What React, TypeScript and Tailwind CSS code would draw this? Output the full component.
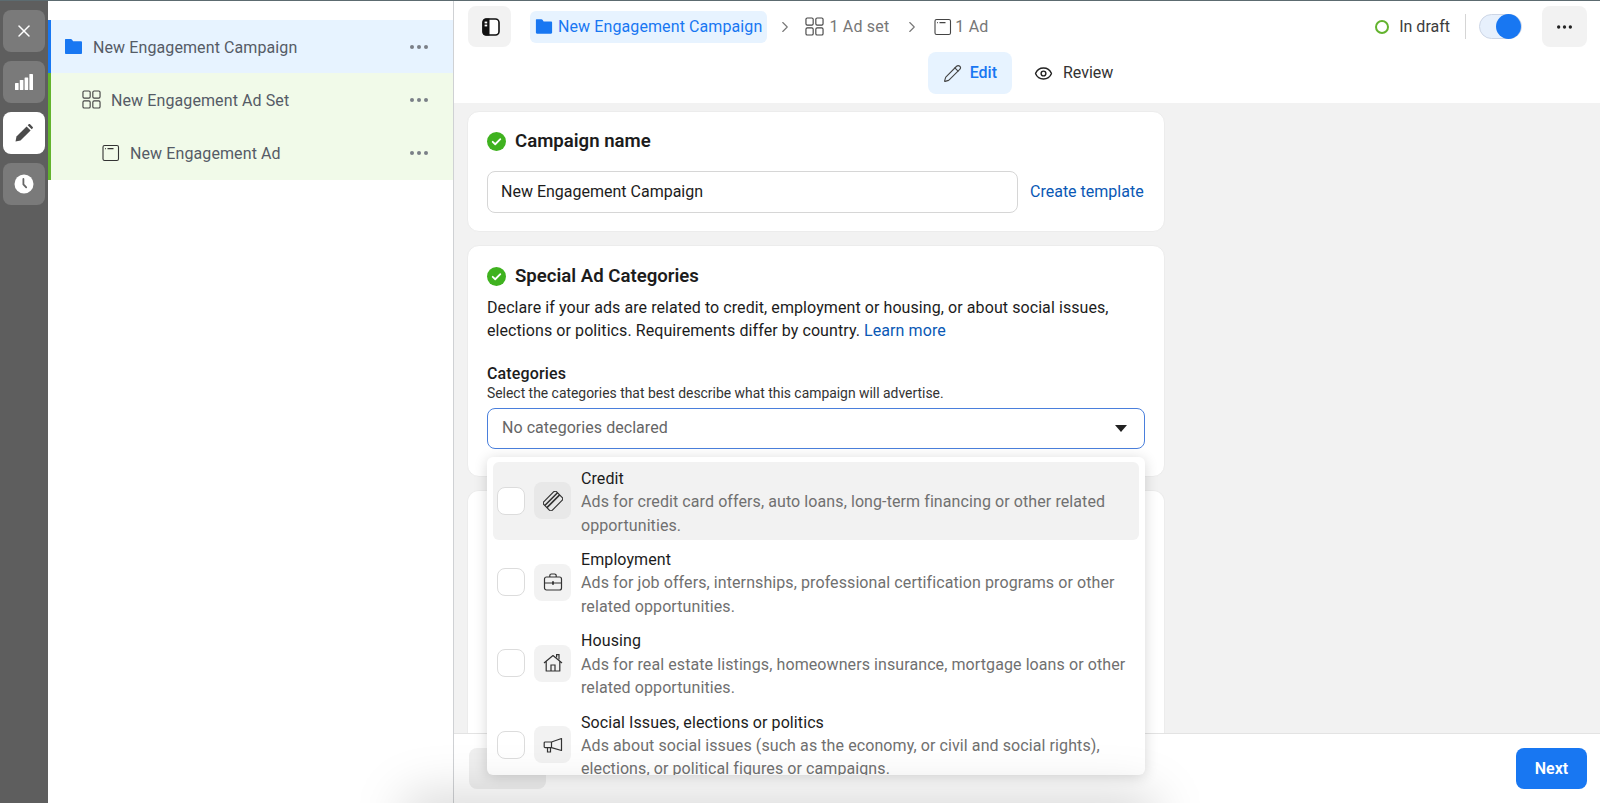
import React from 'react'
import { Pencil, X, Eye, ChevronRight } from 'lucide-react'

const GridIcon = ({ className = '' }: { className?: string }) => (
  <svg viewBox="0 0 20 20" fill="none" stroke="currentColor" strokeWidth="1.2" className={className}>
    <rect x="1" y="1" width="7.6" height="7.6" rx="1.4" />
    <rect x="11.4" y="1" width="7.6" height="7.6" rx="1.4" />
    <rect x="1" y="11.4" width="7.6" height="7.6" rx="1.4" />
    <rect x="11.4" y="11.4" width="7.6" height="7.6" rx="1.4" />
  </svg>
)

const AdIcon = ({ className = '' }: { className?: string }) => (
  <svg viewBox="0 0 18 18" fill="none" stroke="currentColor" strokeWidth="1.1" className={className}>
    <rect x="1" y="1.5" width="15.5" height="15" rx="1.6" />
    <path d="M3 4.6h.8M5.5 4.6h6" />
  </svg>
)

const FolderIcon = ({ className = '' }: { className?: string }) => (
  <svg viewBox="0 0 20 18" fill="#1877f2" className={className}>
    <path d="M1.5 1h5.6c.5 0 .9.2 1.2.6L9.6 3.4h8.2c.7 0 1.2.5 1.2 1.2v11.2c0 .7-.5 1.2-1.2 1.2H2.2c-.7 0-1.2-.5-1.2-1.2V1.5z" />
  </svg>
)

const CheckBadge = () => (
  <svg viewBox="0 0 18 18" className="h-[19px] w-[19px] shrink-0">
    <circle cx="9" cy="9" r="9" fill="#3fb21f" />
    <path d="M5.4 9.3l2.4 2.3 4.8-4.8" fill="none" stroke="#fff" strokeWidth="1.7" strokeLinecap="round" strokeLinejoin="round" />
  </svg>
)

const Dots = ({ className = '' }: { className?: string }) => (
  <svg viewBox="0 0 18 4" fill="currentColor" className={className}>
    <circle cx="2" cy="2" r="2" />
    <circle cx="9" cy="2" r="2" />
    <circle cx="16" cy="2" r="2" />
  </svg>
)

const BarsIcon = () => (
  <svg viewBox="0 0 18 16" fill="#fff" className="h-[16px] w-[18px]">
    <rect x="0" y="9" width="3.6" height="7" rx=".6" />
    <rect x="4.8" y="6" width="3.6" height="10" rx=".6" />
    <rect x="9.6" y="3.5" width="3.6" height="12.5" rx=".6" />
    <rect x="14.4" y="0" width="3.6" height="16" rx=".6" />
  </svg>
)

const SolidPencil = () => (
  <svg viewBox="0 0 18 18" fill="#4b4b4b" className="h-[18px] w-[18px]">
    <path d="M0.5 17.5l1-5L11.6 2.4l4 4L5.5 16.5l-5 1z" />
    <path d="M12.7 1.3l1-1c.4-.4 1-.4 1.4 0l2.6 2.6c.4.4.4 1 0 1.4l-1 1-4-4z" />
  </svg>
)

const ClockIcon = () => (
  <svg viewBox="0 0 20 20" className="h-[20px] w-[20px]">
    <circle cx="10" cy="10" r="9.5" fill="#fff" />
    <path d="M9.4 5v5.4l2.8 3" fill="none" stroke="#666" strokeWidth="1.8" strokeLinecap="round" strokeLinejoin="round" />
  </svg>
)

const PanelIcon = () => (
  <svg viewBox="0 0 18 18" className="h-[18px] w-[18px]">
    <rect x="1" y="1" width="16" height="16" rx="3.5" fill="#fff" stroke="#111" strokeWidth="1.6" />
    <path d="M4 .5h3.5v17H4A3.5 3.5 0 0 1 .5 14V4A3.5 3.5 0 0 1 4 .5z" fill="#111" />
    <rect x="2.6" y="3.6" width="2.6" height="1.8" fill="#fff" />
    <rect x="2.6" y="6.6" width="2.6" height="1.8" fill="#fff" />
  </svg>
)

const CardIcon = () => (
  <svg viewBox="0 0 20 20" fill="none" stroke="#333" strokeWidth="1.2" className="h-[20px] w-[20px]">
    <g transform="rotate(-45 10 10)">
      <rect x="1" y="4" width="18" height="12" rx="2.2" />
      <path d="M1 7.4h18M1 10.4h18" strokeWidth="1.6" />
    </g>
  </svg>
)

const CaseIcon = () => (
  <svg viewBox="0 0 20 20" fill="none" stroke="#333" strokeWidth="1.2" className="h-[20px] w-[20px]">
    <rect x="1.5" y="5" width="17" height="13" rx="2" />
    <path d="M6.8 5V3.6A1.6 1.6 0 0 1 8.4 2h3.2a1.6 1.6 0 0 1 1.6 1.6V5M1.5 11h17" />
    <path d="M10 9.2v3.6" strokeWidth="1.8" />
  </svg>
)

const HouseIcon = () => (
  <svg viewBox="0 0 20 20" fill="none" stroke="#333" strokeWidth="1.2" className="h-[20px] w-[20px]">
    <path d="M1 10l9-7.5L19 10M3.2 8.4V18h13.6V8.4" strokeLinejoin="round" />
    <path d="M8 18v-6h4v6M13.6 4.6V1.6h2.4v5" />
  </svg>
)

const MegaphoneIcon = () => (
  <svg viewBox="0 0 20 20" fill="none" stroke="#333" strokeWidth="1.2" className="h-[20px] w-[20px]">
    <path d="M18.5 3.5v12L8.5 12.6H2.2c-.6 0-1-.4-1-1V8c0-.6.4-1 1-1h6.3l10-3.5z" strokeLinejoin="round" />
    <path d="M8.5 7v5.6M4.5 12.6V17h3v-4.4" />
  </svg>
)

const categories = [
  {
    title: 'Credit',
    icon: <CardIcon />,
    desc: 'Ads for credit card offers, auto loans, long-term financing or other related opportunities.',
    active: true,
  },
  {
    title: 'Employment',
    icon: <CaseIcon />,
    desc: 'Ads for job offers, internships, professional certification programs or other related opportunities.',
  },
  {
    title: 'Housing',
    icon: <HouseIcon />,
    desc: 'Ads for real estate listings, homeowners insurance, mortgage loans or other related opportunities.',
  },
  {
    title: 'Social Issues, elections or politics',
    icon: <MegaphoneIcon />,
    desc: 'Ads about social issues (such as the economy, or civil and social rights), elections, or political figures or campaigns.',
  },
]

const TreeRow = ({ label, icon, className }: { label: string; icon: React.ReactNode; className: string }) => (
  <div className={`flex h-[53.3px] items-center pr-[25px] ${className}`}>
    <div className="flex flex-1 items-center gap-[10px]">
      {icon}
      <span className="pt-[2px] text-[16px] tracking-[0.1px] text-[#555b66]">{label}</span>
    </div>
    <Dots className="h-[4px] w-[18px] text-[#7a7f87]" />
  </div>
)

const App = () => {
  return (
    <div className="relative flex h-[803px] w-[1600px] overflow-hidden bg-white font-['Roboto',sans-serif] text-[#1c1e21]">
      <div className="absolute inset-x-0 top-0 z-30 h-px bg-[#5c6b70]" />

      {/* tool rail */}
      <div className="flex w-[48px] shrink-0 flex-col gap-[9px] bg-[#5e5e5e] pl-[3px] pr-[3px] pt-[10px]">
        <div className="flex h-[42px] items-center justify-center rounded-lg bg-[#7a7a7a]">
          <X className="h-[20px] w-[20px] text-white" strokeWidth={1.8} />
        </div>
        <div className="flex h-[42px] items-center justify-center rounded-lg bg-[#7a7a7a]">
          <BarsIcon />
        </div>
        <div className="flex h-[42px] items-center justify-center rounded-lg bg-white">
          <SolidPencil />
        </div>
        <div className="flex h-[42px] items-center justify-center rounded-lg bg-[#7a7a7a]">
          <ClockIcon />
        </div>
      </div>

      {/* campaign tree */}
      <div className="w-[406px] shrink-0 border-r border-[#cfd1d4] pt-[20px]">
        <TreeRow
          label="New Engagement Campaign"
          className="border-l-[3px] border-[#1877f2] bg-[#e7f3ff] pl-[13px]"
          icon={<FolderIcon className="h-[17px] w-[19px]" />}
        />
        <TreeRow
          label="New Engagement Ad Set"
          className="border-l-[3px] border-[#63b32e] bg-[#f1fae9] pl-[31px]"
          icon={<GridIcon className="h-[19px] w-[19px] text-[#444]" />}
        />
        <TreeRow
          label="New Engagement Ad"
          className="border-l-[3px] border-[#63b32e] bg-[#f1fae9] pl-[51px]"
          icon={<AdIcon className="h-[18px] w-[18px] text-[#333]" />}
        />
      </div>

      {/* main */}
      <div className="flex min-w-0 flex-1 flex-col">
        <div className="h-[103px] shrink-0 bg-white">
          <div className="flex items-center pl-[14px] pr-[13px] pt-[6px]">
            <div className="flex h-[41px] w-[43px] items-center justify-center rounded-lg bg-[#f2f2f2] pl-[2px]">
              <PanelIcon />
            </div>
            <div className="ml-[19px] flex h-[32px] items-center gap-[5px] rounded-md bg-[#e7f3ff] px-[5px]">
              <FolderIcon className="h-[17px] w-[18px]" />
              <span className="text-[16px] tracking-[0.1px] text-[#1877f2]">New Engagement Campaign</span>
            </div>
            <ChevronRight className="ml-[9px] h-[18px] w-[18px] text-[#777]" strokeWidth={1.5} />
            <GridIcon className="ml-[11px] h-[19px] w-[19px] text-[#444]" />
            <span className="ml-[5px] text-[16px] tracking-[0.2px] text-[#777]">1 Ad set</span>
            <ChevronRight className="ml-[14px] h-[18px] w-[18px] text-[#777]" strokeWidth={1.5} />
            <AdIcon className="ml-[13px] h-[18px] w-[18px] text-[#444]" />
            <span className="ml-[3px] text-[16px] tracking-[0.2px] text-[#777]">1 Ad</span>
            <div className="ml-auto flex items-center">
              <div className="h-[14px] w-[14px] rounded-full border-2 border-[#63b32e]" />
              <span className="ml-[10px] text-[16px] text-[#3c3c3c]">In draft</span>
              <div className="ml-[15px] h-[25px] w-px bg-[#d5d5d5]" />
              <div className="relative ml-[13px] h-[25px] w-[43px] rounded-full border border-[#cdd6e6] bg-[#e7f0fc]">
                <div className="absolute right-0 top-[-1px] h-[25px] w-[25px] rounded-full bg-[#1877f2]" />
              </div>
              <div className="ml-[20px] flex h-[41px] w-[45px] items-center justify-center rounded-lg bg-[#f2f2f2]">
                <Dots className="h-[4px] w-[15px] text-[#222]" />
              </div>
            </div>
          </div>
          <div className="ml-[1px] mt-[5px] flex justify-center gap-[8px]">
            <div className="flex h-[42px] items-center gap-[8px] rounded-lg bg-[#e7f3ff] px-[15px]">
              <Pencil className="h-[19px] w-[19px] text-[#444]" strokeWidth={1.4} />
              <span className="text-[16px] font-medium text-[#1877f2]">Edit</span>
            </div>
            <div className="flex h-[42px] items-center gap-[10px] px-[14px]">
              <Eye className="h-[19px] w-[19px] text-[#222]" strokeWidth={1.8} />
              <span className="text-[16px] text-[#333]">Review</span>
            </div>
          </div>
        </div>

        <div className="flex min-h-0 flex-1 flex-col gap-[13px] border-b border-[#e3e3e3] bg-[#f2f2f2] pt-[8px] pl-[13px]">
          <section className="h-[121px] w-[698px] shrink-0 rounded-xl border border-[#ececec] bg-white px-[19px] pt-[19px]">
            <div className="flex items-center gap-[9px]">
              <CheckBadge />
              <h2 className="text-[18.6px] font-semibold leading-[21px] text-[#1c1c1c]">Campaign name</h2>
            </div>
            <div className="mt-[19px] flex items-center gap-[12px]">
              <div className="flex h-[42px] w-[531px] items-center rounded-lg border border-[#d6d6d6] px-[13px] text-[16px] text-[#1c1c1c]">
                New Engagement Campaign
              </div>
              <a className="text-[16px] text-[#0a58b5]">Create template</a>
            </div>
          </section>

          <section className="relative z-10 h-[232px] w-[698px] shrink-0 rounded-xl border border-[#ececec] bg-white px-[19px] pt-[20px]">
            <div className="flex items-center gap-[9px]">
              <CheckBadge />
              <h2 className="text-[18.6px] font-semibold leading-[21px] text-[#1c1c1c]">Special Ad Categories</h2>
            </div>
            <p className="mt-[9px] text-[16px] leading-[23.4px] tracking-[0.08px] text-[#1c1c1c]">
              Declare if your ads are related to credit, employment or housing, or about social issues, elections or politics. Requirements differ by country.{' '}
              <a className="text-[#0a58b5]">Learn more</a>
            </p>
            <div className="mt-[21px] text-[16px] font-medium leading-[19px] tracking-[0.15px] text-[#1c1c1c]">Categories</div>
            <div className="mt-[2px] text-[13.9px] leading-[16px] text-[#333]">
              Select the categories that best describe what this campaign will advertise.
            </div>
            <div className="relative mt-[7px]">
              <div className="flex h-[41px] items-center justify-between rounded-lg border-[1.5px] border-[#4a7fdc] pl-[14px] pr-[17px] text-[16px] tracking-[0.05px] text-[#666]">
                No categories declared
                <span className="h-0 w-0 border-x-[6px] border-t-[7px] border-x-transparent border-t-[#222]" />
              </div>

              <div className="absolute left-0 top-[49px] h-[318px] w-[658px] overflow-hidden rounded-md bg-white px-[6px] pt-[5px] shadow-[0_2px_14px_rgba(0,0,0,0.16)]">
                {categories.map((cat) => (
                  <div
                    key={cat.title}
                    className={`mb-[3.3px] flex h-[78px] items-center rounded-md pl-[4px] pr-[10px] ${cat.active ? 'bg-[#f2f2f2]' : ''}`}
                  >
                    <div className="h-[28px] w-[28px] shrink-0 rounded-lg border border-[#dcdcdc] bg-white" />
                    <div className={`ml-[9px] flex h-[37px] w-[37px] shrink-0 items-center justify-center rounded-lg ${cat.active ? 'bg-[#e8e8e8]' : 'bg-[#f2f2f2]'}`}>
                      {cat.icon}
                    </div>
                    <div className="ml-[10px] min-w-0 flex-1 pt-[2px] text-[16px] leading-[23.4px] tracking-[0.09px]">
                      <div className="text-[#1c1c1c]">{cat.title}</div>
                      <div className="text-[#707070]">{cat.desc}</div>
                    </div>
                  </div>
                ))}
              </div>
            </div>
          </section>

          <section className="min-h-0 w-[698px] flex-1 rounded-t-xl border border-b-0 border-[#ececec] bg-white" />
        </div>

        <div className="flex h-[69px] shrink-0 items-center justify-between bg-white pl-[15px] pr-[13px]">
          <div className="h-[41px] w-[77px] rounded-lg bg-[#efefef]" />
          <button className="relative z-10 h-[41px] w-[71px] rounded-lg bg-[#1877f2] text-[16px] font-semibold text-white">
            Next
          </button>
        </div>
      </div>

      {/* soft shadow at the page bottom */}
      <div className="pointer-events-none absolute bottom-[-40px] left-[400px] z-20 h-[50px] w-[760px] rounded-full bg-black/15 blur-[24px]" />
    </div>
  )
}

export default App
